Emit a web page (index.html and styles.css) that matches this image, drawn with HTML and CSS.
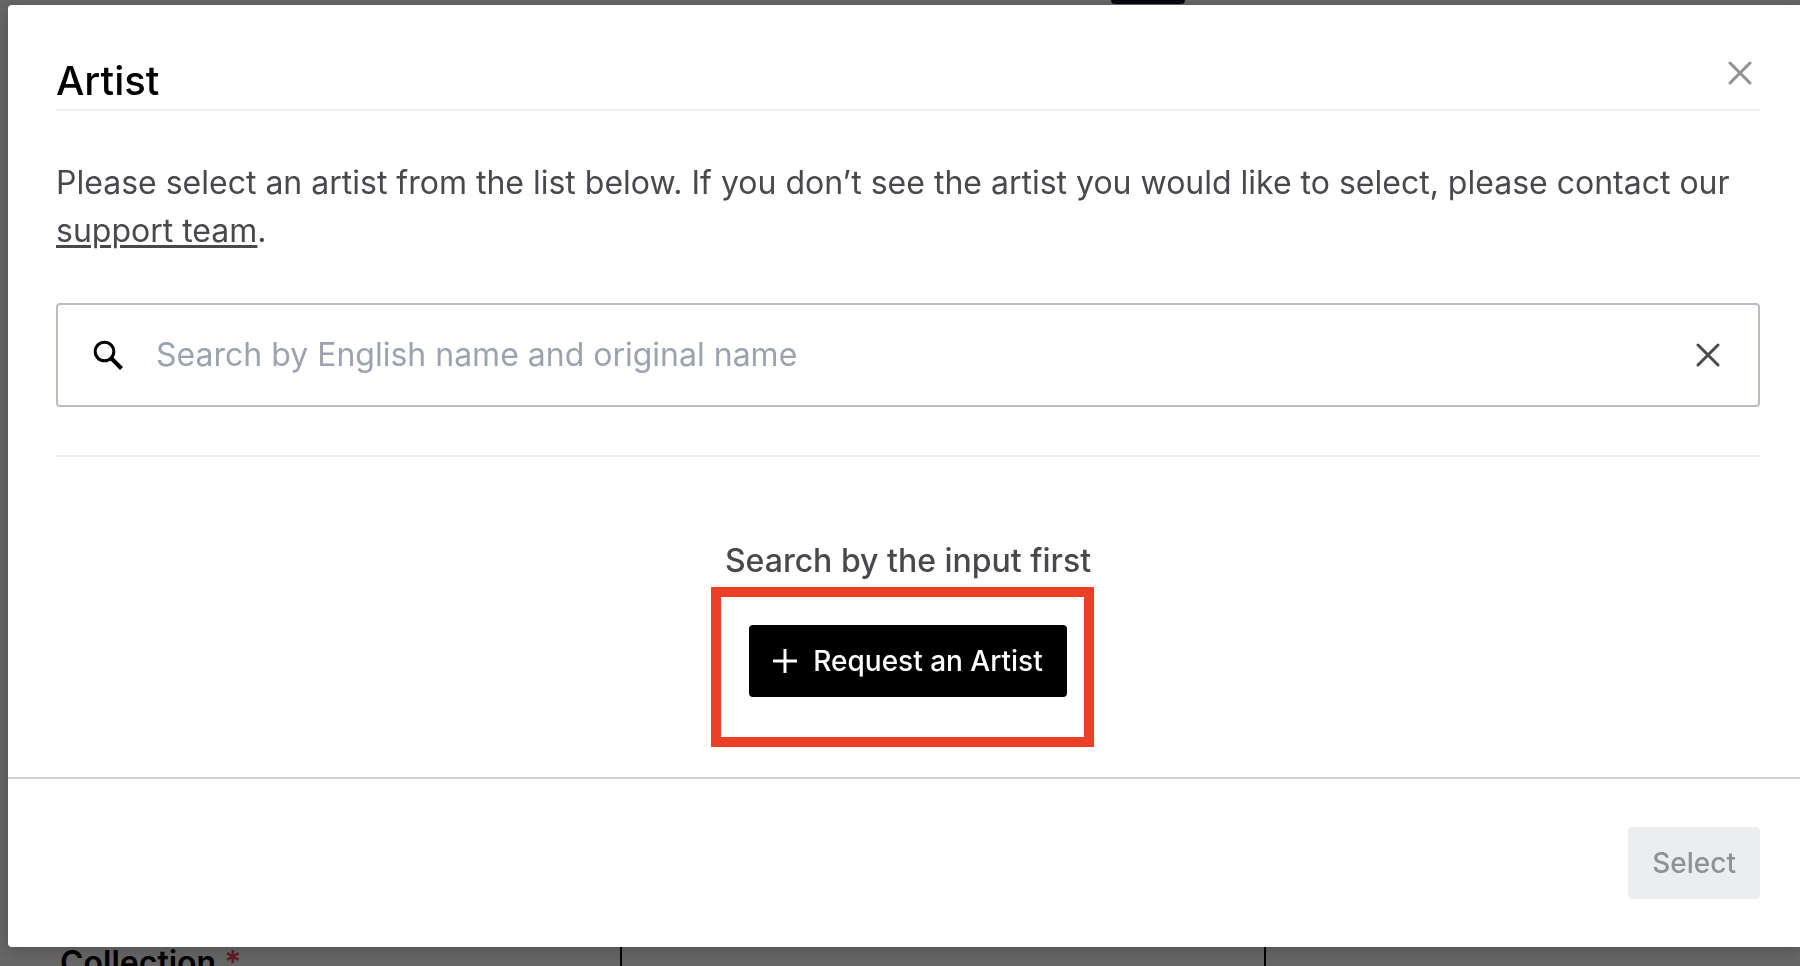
FILE: index.html
```html
<!DOCTYPE html>
<html lang="en">
<head>
    <meta charset="UTF-8">
    <meta name="viewport" content="width=device-width, initial-scale=1">
    <link rel="stylesheet" href="styles.css">
    <title>Artist</title>
</head>
<body>
    <div class="page">
        <div class="page-top">
            <span class="page-pill"></span>
        </div>
        <div class="page-row">
            <div class="page-cell">Collection <span class="required">*</span></div>
            <div class="page-cell"></div>
            <div class="page-cell"></div>
        </div>
    </div>
    <div class="overlay">
        <div class="modal" role="dialog" aria-labelledby="modal-title">
            <div class="modal-body">
                <header class="modal-header">
                    <h1 id="modal-title">Artist</h1>
                    <button type="button" class="icon-button close" aria-label="Close">
                        <svg width="24" height="24" viewBox="0 0 24 24"><path d="M2 2L22 22M22 2L2 22"/></svg>
                    </button>
                </header>
                <p class="intro">Please select an artist from the list below. If you don’t see the artist you would like to select, please contact our <a href="#support">support team</a>.</p>
                <form class="search">
                    <svg class="search-icon" width="30" height="30" viewBox="0 0 30 30"><circle cx="11.500" cy="11.500" r="9.300"/><path d="M18 18L28.500 28.500" stroke-width="4"/></svg>
                    <input type="text" id="search" aria-label="Search artists" placeholder="Search by English name and original name">
                    <button type="reset" class="icon-button clear" aria-label="Clear">
                        <svg width="24" height="24" viewBox="0 0 24 24"><path d="M2 2L22 22M22 2L2 22"/></svg>
                    </button>
                </form>
                <section class="results">
                    <p>Search by the input first</p>
                    <div class="request">
                        <button type="button" class="button primary">
                            <svg width="24" height="24" viewBox="0 0 24 24"><path d="M12 0V24M0 12H24"/></svg>
                            Request an Artist
                        </button>
                    </div>
                </section>
            </div>
            <footer class="modal-footer">
                <button type="button" class="button" disabled>Select</button>
            </footer>
        </div>
    </div>
</body>
</html>
```
FILE: styles.css
```css
* {
  box-sizing: border-box;
}

body {
  margin: 0;
  font-family: Inter, "Liberation Sans", sans-serif;
  font-size: 32px;
  line-height: 48px;
  color: #47494d;
}

h1, p {
  margin: 0;
}

svg {
  fill: none;
  stroke: currentColor;
  stroke-width: 3;
  stroke-linecap: round;
  flex-shrink: 0;
}

/* page behind the modal */
.page {
  position: fixed;
  inset: 0;
  display: flex;
  flex-direction: column;
  justify-content: space-between;
  overflow: hidden;
  background: #fff;
  color: #000;
}

.page-top {
  display: flex;
  justify-content: center;
  padding-left: 496px;
}

.page-pill {
  width: 74px;
  height: 4px;
  border-radius: 0 0 4px 4px;
  background: #1c1030;
}

.page-row {
  display: grid;
  grid-template-columns: 622px 644px 1fr;
  height: 26px;
}

.page-cell {
  height: 80px;
  padding-left: 60px;
  border-right: 2px solid #000;
  font-weight: 600;
  line-height: 46px;
}

.page-cell:last-child {
  border-right: none;
}

.required {
  color: #f04655;
}

.overlay {
  position: relative;
  min-height: 100vh;
  padding: 5px 0 19px 8px;
  background: rgba(0, 0, 0, 0.6);
}

.modal {
  border-radius: 4px 0 0 4px;
  background: #fff;
  box-shadow: 0 4px 16px rgba(0, 0, 0, 0.2);
}

.modal-body {
  padding: 48px 40px 30px 48px;
}

.modal-header {
  display: flex;
  justify-content: space-between;
  align-items: flex-start;
  height: 58px;
  border-bottom: 2px solid #eee;
}

h1 {
  padding-top: 4px;
  font-size: 40px;
  font-weight: 500;
  color: #000;
}

.icon-button {
  display: flex;
  padding: 8px;
  border: none;
  background: none;
  color: #47494d;
  cursor: pointer;
}

.close {
  color: #8f9195;
}

.intro {
  padding: 48px 0;
}

.intro a {
  color: inherit;
  text-underline-offset: 3px;
  text-decoration-thickness: 3px;
}

.search {
  display: flex;
  align-items: center;
  height: 104px;
  padding: 0 30px 0 35px;
  border: 2px solid #b9bdc2;
  border-radius: 4px;
}

.search-icon {
  color: #000;
  stroke-linecap: butt;
}

.search input {
  flex: 1;
  min-width: 0;
  padding: 0 33px;
  border: none;
  outline: none;
  background: none;
  font: inherit;
}

.search input::placeholder {
  color: #9ca3af;
}

.results {
  display: flex;
  flex-direction: column;
  align-items: center;
  margin-top: 48px;
  padding: 80px 0 50px;
  border-top: 2px solid #eee;
  font-weight: 500;
}

.request {
  position: relative;
  margin-top: 40px;
}

/* highlight around the request button */
.request::after {
  content: "";
  position: absolute;
  inset: -38px -27px -50px -38px;
  border: 10px solid #eb4027;
  pointer-events: none;
}

.button {
  display: flex;
  align-items: center;
  gap: 16px;
  height: 72px;
  padding: 0 24px;
  border: none;
  border-radius: 4px;
  font-family: inherit;
  font-size: 28px;
  font-weight: 500;
  cursor: pointer;
}

.primary {
  background: #000;
  color: #fff;
}

.primary svg {
  stroke-linecap: butt;
}

.button:disabled {
  background: #ecedef;
  color: #8f9195;
  cursor: default;
}

.modal-footer {
  display: flex;
  justify-content: flex-end;
  padding: 48px 40px 48px 48px;
  border-top: 2px solid #d1d1d6;
}
```
